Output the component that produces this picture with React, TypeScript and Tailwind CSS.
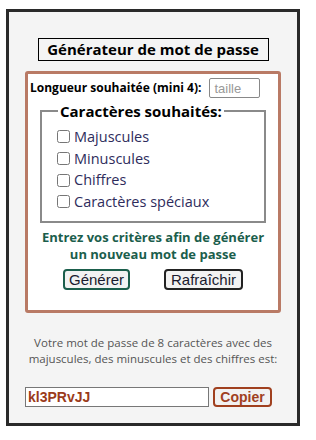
import React from "react";

export default function App() {
  const seg = { fontFamily: '"Open Sans", "Noto Sans", sans-serif' };
  const ari = { fontFamily: '"Liberation Sans", Arial, sans-serif' };

  return (
    <div className="w-[316px] h-[440px] bg-white pt-[9px] pl-[6px]">
      <div
        className="w-[294px] h-[417px] border-[3px] border-[#2a2a2a] bg-[#f4f4f4] flex flex-col items-center pt-[26px]"
        style={seg}
      >
        {/* Title */}
        <div className="w-[231px] h-[23px] border border-black flex items-center justify-center">
          <h1 className="text-[15px] font-bold text-black leading-none">Générateur de mot de passe</h1>
        </div>

        {/* Form panel */}
        <div className="mt-[10px] w-[256px] h-[242px] border-[3px] border-[#b97a65] rounded-[3px] bg-white flex flex-col">
          <div className="flex items-center pl-[2px] pt-[4px] h-[24px]">
            <span className="text-[12px] font-bold text-black">Longueur souhaitée (mini 4):</span>
            <input
              type="text"
              placeholder="taille"
              className="ml-[8px] w-[51px] h-[20px] border border-[#888] rounded-[2px] px-[4px] text-[13px] placeholder:text-[#999] bg-white"
              style={ari}
            />
          </div>

          <fieldset className="mx-[12px] mt-[4px] h-[121px] border-2 border-[#8a8a8a] px-[15px]">
            <legend className="ml-[1px] px-[2px] text-[15px] font-bold text-black leading-[18px]">
              Caractères souhaités:
            </legend>
            <div className="flex flex-col pt-[6px]">
              {["Majuscules", "Minuscules", "Chiffres", "Caractères spéciaux"].map((l) => (
                <label key={l} className="flex items-center h-[21.7px] text-[14.5px] text-[#2e2c5c]">
                  <input type="checkbox" className="w-[13px] h-[13px] mr-[4px] m-0" />
                  {l}
                </label>
              ))}
            </div>
          </fieldset>

          <p className="mt-[6px] text-center text-[13px] font-bold text-[#1b5e4c] leading-[17px]">
            Entrez vos critères afin de générer
            <br />
            un nouveau mot de passe
          </p>

          <div className="mt-[6px] flex justify-center gap-[34px]">
            <button
              className="w-[67px] h-[21px] border-2 border-[#1b5e4c] rounded-[4px] bg-[#f2f2f2] text-[15px] text-[#1a1a2e] leading-none"
              style={ari}
            >
              Générer
            </button>
            <button
              className="w-[79px] h-[21px] border-2 border-[#222] rounded-[4px] bg-[#f2f2f2] text-[15px] text-[#1a1a2e] leading-none"
              style={ari}
            >
              Rafraîchir
            </button>
          </div>
        </div>

        {/* Result */}
        <p className="mt-[22px] text-center text-[11.5px] text-[#555] leading-[16px]">
          Votre mot de passe de 8 caractères avec des
          <br />
          majuscules, des minuscules et des chiffres est:
        </p>

        <div className="mt-[20px] w-[256px] flex items-center">
          <input
            type="text"
            readOnly
            value="kl3PRvJJ"
            className="w-[184px] h-[20px] border border-[#777] bg-white px-[2px] text-[14px] font-bold text-[#9b3b1b]"
            style={ari}
          />
          <button
            className="ml-[4px] w-[59px] h-[20px] border-2 border-[#a0401f] rounded-[4px] bg-[#f2f2f2] text-[14px] font-bold text-[#a0401f] leading-none"
            style={ari}
          >
            Copier
          </button>
        </div>
      </div>
    </div>
  );
}
